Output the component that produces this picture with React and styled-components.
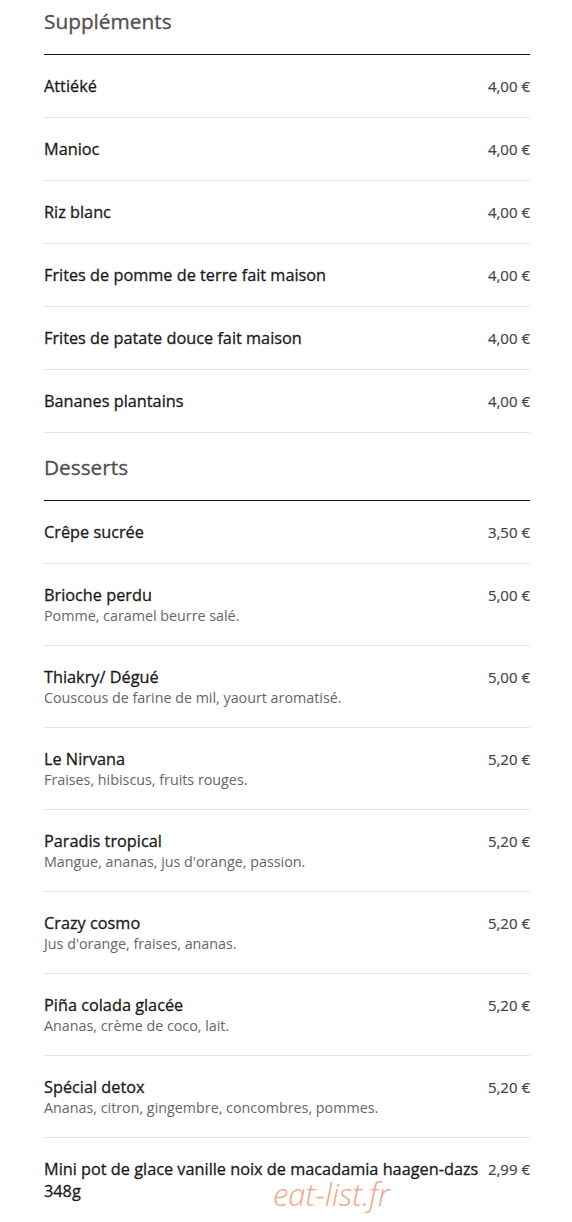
import React from 'react'
import styled, { createGlobalStyle } from 'styled-components'

const GlobalStyle = createGlobalStyle`
  html, body {
    margin: 0;
    padding: 0;
    background: #fff;
  }
  body {
    font-family: "Open Sans", "Liberation Sans", sans-serif;
  }
`

const menu = [
  {
    title: 'Suppléments',
    items: [
      { name: 'Attiéké', price: '4,00 €' },
      { name: 'Manioc', price: '4,00 €' },
      { name: 'Riz blanc', price: '4,00 €' },
      { name: 'Frites de pomme de terre fait maison', price: '4,00 €' },
      { name: 'Frites de patate douce fait maison', price: '4,00 €' },
      { name: 'Bananes plantains', price: '4,00 €' },
    ],
  },
  {
    title: 'Desserts',
    items: [
      { name: 'Crêpe sucrée', price: '3,50 €' },
      { name: 'Brioche perdu', desc: 'Pomme, caramel beurre salé.', price: '5,00 €' },
      { name: 'Thiakry/ Dégué', desc: 'Couscous de farine de mil, yaourt aromatisé.', price: '5,00 €' },
      { name: 'Le Nirvana', desc: 'Fraises, hibiscus, fruits rouges.', price: '5,20 €' },
      { name: 'Paradis tropical', desc: "Mangue, ananas, jus d'orange, passion.", price: '5,20 €' },
      { name: 'Crazy cosmo', desc: "Jus d'orange, fraises, ananas.", price: '5,20 €' },
      { name: 'Piña colada glacée', desc: 'Ananas, crème de coco, lait.', price: '5,20 €' },
      { name: 'Spécial detox', desc: 'Ananas, citron, gingembre, concombres, pommes.', price: '5,20 €' },
      { name: 'Mini pot de glace vanille noix de macadamia haagen-dazs 348g', price: '2,99 €' },
    ],
  },
]

const Page = styled.div`
  position: relative;
  width: 486px;
  margin: 0 0 0 44px;
`

const Section = styled.section`
  display: flex;
  flex-direction: column;
`

const Title = styled.h2`
  margin: 0;
  padding: ${p => (p.$first ? '7px' : '20px')} 0 19px;
  border-bottom: 1px solid #111;
  font-size: 20.8px;
  line-height: 28px;
  font-weight: 400;
  color: #4f4f4f;
  -webkit-text-stroke: 0.3px #4f4f4f;
`

const Row = styled.div`
  display: flex;
  justify-content: space-between;
  align-items: flex-start;
  gap: 8px;
  padding: 20px 0;
  border-bottom: 1px solid #e6e6e6;
`

const Info = styled.div`
  display: flex;
  flex-direction: column;
`

const Name = styled.div`
  font-size: 16.3px;
  line-height: 22px;
  font-weight: 400;
  color: #1a1a1a;
  -webkit-text-stroke: 0.3px #1a1a1a;
`

const Desc = styled.div`
  font-size: 14.3px;
  line-height: 19px;
  color: #666;
`

const Price = styled.div`
  flex-shrink: 0;
  font-size: 15px;
  line-height: 22px;
  font-weight: 400;
  color: #444;
  -webkit-text-stroke: 0.2px #444;
`

const Watermark = styled.div`
  position: absolute;
  left: 229px;
  bottom: 8px;
  font-size: 31px;
  line-height: 42px;
  font-style: italic;
  font-weight: 300;
  color: #f4a582;
`

function App() {
  return (
    <>
      <GlobalStyle />
      <Page>
        {menu.map((sec, i) => (
          <Section key={sec.title}>
            <Title $first={i === 0}>{sec.title}</Title>
            {sec.items.map(item => (
              <Row key={item.name}>
                <Info>
                  <Name>{item.name}</Name>
                  {item.desc && <Desc>{item.desc}</Desc>}
                </Info>
                <Price>{item.price}</Price>
              </Row>
            ))}
          </Section>
        ))}
        <Watermark>eat-list.fr</Watermark>
      </Page>
    </>
  )
}

export default App
